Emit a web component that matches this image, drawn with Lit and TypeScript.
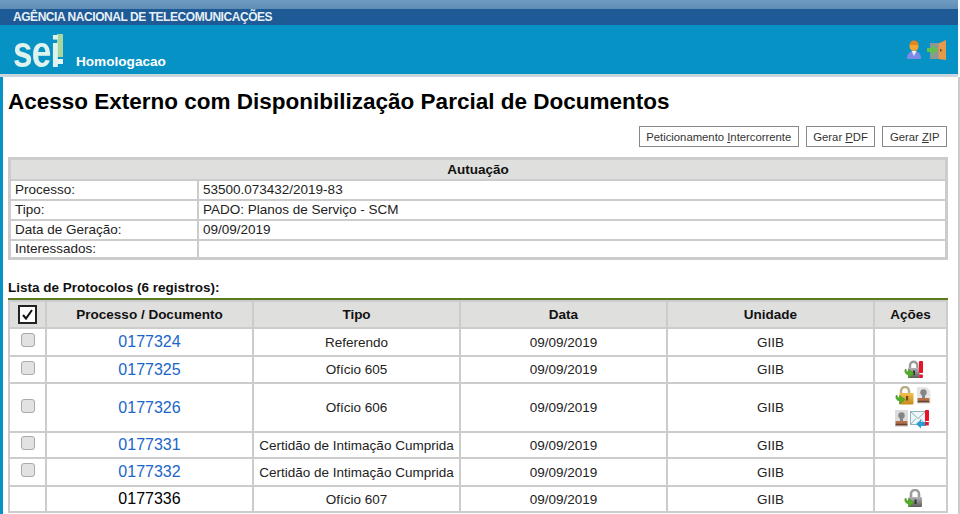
import { LitElement, html, css, svg } from "lit";
import { customElement } from "lit/decorators.js";

const grad = svg`<defs>
  <linearGradient id="g1" x1="0" y1="0" x2="0" y2="1"><stop offset="0" stop-color="#b4b4b4"/><stop offset="1" stop-color="#5f5f5f"/></linearGradient>
  <linearGradient id="g2" x1="0" y1="0" x2="0" y2="1"><stop offset="0" stop-color="#f2c050"/><stop offset="1" stop-color="#c98a1c"/></linearGradient>
</defs>`;
const arrow = svg`<path d="M1 9.5c-.6 3 .8 5 3.6 5.4V18l5.4-4.4L4.6 9.5v2.6C3 12 2 11 2.2 9.5z" fill="#54b028" stroke="#3f8f1c" stroke-width=".6"/>`;
const lockRed = svg`<svg class="ico" viewBox="0 0 20 20">${grad}
  <path d="M6 9V5.5a3.7 3.7 0 0 1 7.4 0V9" fill="none" stroke="#9c9c9c" stroke-width="2.4"/>
  <rect x="4" y="8" width="11.5" height="10" rx="1" fill="url(#g1)"/><rect x="9" y="10.5" width="2" height="4.5" fill="#333"/>
  ${arrow}<rect x="15" y="1" width="4" height="12" rx=".8" fill="#ec1028"/><rect x="15.2" y="14.5" width="3.6" height="3.5" fill="#ec1028"/></svg>`;
const lockGrey = svg`<svg class="ico" viewBox="0 0 20 20">${grad}
  <path d="M7 9V5a4 4 0 0 1 8 0V9" fill="none" stroke="#9c9c9c" stroke-width="2.6"/>
  <rect x="4.5" y="8" width="13.5" height="10" rx="1" fill="url(#g1)"/><rect x="10.5" y="10.5" width="2" height="4.5" fill="#333"/>${arrow}</svg>`;
const lockGold = svg`<svg class="ico" viewBox="0 0 20 20">${grad}
  <path d="M6 8V5a4 4 0 0 1 8 0v3" fill="none" stroke="#b7ab88" stroke-width="2.4"/>
  <rect x="4.5" y="7" width="14" height="11.5" rx="1" fill="url(#g2)"/><rect x="11" y="10" width="2.2" height="4.5" fill="#6a4a10"/>${arrow}</svg>`;
const stampBody = svg`<circle cx="7.5" cy="6.5" r="3.2" fill="#858585"/><rect x="6" y="8" width="3" height="5" fill="#858585"/><rect x="1.5" y="12" width="12" height="2.8" rx="1" fill="#b86f48"/><rect x="1.5" y="14.6" width="12" height="2" rx=".6" fill="#6f4029"/>`;
const stampPaper = svg`<svg class="ico15" viewBox="0 0 15 20"><path d="M1 1h9.5L14.5 5v13H1z" fill="#e6e6e6"/>${stampBody}</svg>`;
const stamp = svg`<svg class="ico15" viewBox="0 0 15 20"><rect x="1" y="1" width="13" height="17" fill="#dcdcdc"/>${stampBody}</svg>`;
const mail = svg`<svg class="ico" viewBox="0 0 20 20"><rect x=".5" y="2.5" width="15" height="13" fill="#eef6f8" stroke="#8db2be"/><path d="M.5 2.5l7.5 7 7.5-7M.5 15.5l5.5-6M15.5 15.5l-5.5-6" fill="none" stroke="#8db2be"/><path d="M6 15l5-4.5v2.5h5v4h-5v2.5z" fill="#2b9fd4"/><rect x="15" y="1" width="4" height="11" rx=".8" fill="#ec1028"/><rect x="15.2" y="13" width="3.6" height="3.4" fill="#ec1028"/></svg>`;

type Row = { id: string; tipo: string; link: boolean; h: number; icons: unknown };
const rows: Row[] = [
  { id: "0177324", tipo: "Referendo", link: true, h: 26, icons: "" },
  { id: "0177325", tipo: "Ofício 605", link: true, h: 25, icons: lockRed },
  { id: "0177326", tipo: "Ofício 606", link: true, h: 47, icons: html`<div class="icons">${lockGold}${stampPaper}</div><div class="icons low">${stamp}${mail}</div>` },
  { id: "0177331", tipo: "Certidão de Intimação Cumprida", link: true, h: 24, icons: "" },
  { id: "0177332", tipo: "Certidão de Intimação Cumprida", link: true, h: 26, icons: "" },
  { id: "0177336", tipo: "Ofício 607", link: false, h: 24, icons: lockGrey },
];

@customElement("app-root")
export class AppRoot extends LitElement {
  static styles = css`
    :host { display: block; height: 514px; overflow: hidden; background: #fff; font-family: "Liberation Sans", Arial, sans-serif; color: #111; }
    .head { margin-right: 2px; }
    .band1 { height: 9px; background: linear-gradient(#6f9cc2, #5d8cb6); }
    .band2 { height: 16px; background: #1d5a96; color: #e8f0f6; font-size: 12px; font-weight: bold; line-height: 16px; padding-left: 13px; letter-spacing: -.45px; }
    .band3 { height: 49px; background: #0792c5; display: flex; align-items: flex-start; padding: 0 11px 0 13px; color: #fff; border-bottom: 3px solid #c9d6dc; }
    .logo { width: 50px; display: flex; height: 40px; margin-top: 9px; }
    .sei { display: block; width: 44px; flex: none; font-size: 44px; font-weight: bold; line-height: 36px; color: #dff3ee; transform: scaleX(.8); transform-origin: left top; white-space: nowrap; letter-spacing: -1px; }
    .bang { display: flex; flex-direction: column; gap: 2px; width: 6px; flex: none; }
    .bang i { display: block; height: 23px; background: #a9d69f; }
    .bang b { display: block; height: 5px; background: #e8f6f2; }
    .sub { font-size: 13.6px; font-weight: bold; margin: 29px 0 0 13px; }
    .top-icons { margin-left: auto; display: flex; gap: 3px; margin-top: 15px; }
    .top-icons svg { width: 20px; height: 20px; display: block; filter: blur(.3px); }
    main { border-left: 3px solid #0792c5; border-right: 2px solid #ccc; padding: 0 10px 0 5px; height: 437px; box-sizing: border-box; }
    h1 { margin: 0; padding-top: 11px; font-size: 22.5px; line-height: 27px; font-weight: bold; color: #000; }
    .btns { display: flex; justify-content: flex-end; gap: 7px; margin: 11px 1px 10px 0; }
    button { height: 21px; padding: 0 6.5px; background: #fff; border: 1px solid #888; font: 11.3px "Liberation Sans", Arial, sans-serif; color: #333; }
    table { width: 940px; table-layout: fixed; border-collapse: separate; border-spacing: 2px; background: #ccc; font-size: 13.5px; }
    td, th { background: #fff; padding: 0; }
    .aut { border: 1px solid #ccc; }
    .aut th { background: #dfdfdd; height: 19px; font-size: 13.5px; }
    .aut td { height: 18px; padding-left: 4px; color: #222; line-height: 16px; }
    .aut tr:last-child td { height: 16px; }
    h2 { font-size: 13.5px; font-weight: bold; margin: 20px 0 3px; line-height: 15px; color: #111; }
    .list-wrap { border-top: 2px solid #5b7a1e; }
    .list th { background: #dfdfdd; font-size: 13.5px; height: 25px; }
    .list td { text-align: center; color: #222; }
    .cb { display: block; width: 12px; height: 12px; margin: -4px auto 0; background: #e2e2e2; border: 1px solid #aaa; border-radius: 3px; }
    .all { display: block; width: 15px; height: 15px; margin: auto; border: 2px solid #222; background: #fff; }
    .all svg { display: block; width: 15px; height: 15px; }
    .pid { font-size: 16px; color: #1a66c9; }
    .pid.plain { color: #000; }
    .ico { width: 20px; height: 20px; display: block; filter: blur(.3px); }
    .ico15 { width: 15px; height: 20px; display: block; filter: blur(.3px); }
    .act > .ico { margin: 0 0 0 29px; }
    .icons { display: flex; padding-left: 20px; gap: 1px; }
    .icons.low { padding-left: 19px; margin-top: 3px; }
  `;

  render() {
    return html`
      <div class="head">
        <div class="band1"></div>
        <div class="band2">AGÊNCIA NACIONAL DE TELECOMUNICAÇÕES</div>
        <div class="band3">
          <div class="logo"><span class="sei">sei</span><span class="bang"><i></i><b></b></span></div>
          <div class="sub">Homologacao</div>
          <div class="top-icons">
            <svg viewBox="0 0 20 20"><path d="M3 19c-.5-5 3-8 7-8s7.500 3 7 8z" fill="#7d8ae6"/><path d="M7.500 11h5l-2.500 5z" fill="#e8f0ff"/><circle cx="10" cy="6.500" r="4.500" fill="#f2a534"/><path d="M5.500 5a4.500 4.500 0 0 1 9 0z" fill="#e0881e"/></svg>
            <svg viewBox="0 0 20 20"><rect x="3" y="3" width="10" height="16" fill="#8b9896"/><path d="M11.500 3.500L19 0v20l-7.500-1z" fill="#e39a4c"/><rect x="13" y="9" width="1.500" height="2.500" fill="#7a4a10"/><path d="M0 8h5V5l6 5-6 5v-3H0z" fill="#62c04c"/></svg>
          </div>
        </div>
      </div>
      <main>
        <h1>Acesso Externo com Disponibilização Parcial de Documentos</h1>
        <div class="btns">
          <button>Peticionamento <u>I</u>ntercorrente</button>
          <button>Gerar <u>P</u>DF</button>
          <button>Gerar <u>Z</u>IP</button>
        </div>
        <table class="aut">
          <colgroup><col style="width:186px" /><col /></colgroup>
          <tr><th colspan="2">Autuação</th></tr>
          <tr><td>Processo:</td><td>53500.073432/2019-83</td></tr>
          <tr><td>Tipo:</td><td>PADO: Planos de Serviço - SCM</td></tr>
          <tr><td>Data de Geração:</td><td>09/09/2019</td></tr>
          <tr><td>Interessados:</td><td></td></tr>
        </table>
        <h2>Lista de Protocolos (6 registros):</h2>
        <div class="list-wrap">
          <table class="list">
            <colgroup>
              <col style="width:35px" /><col style="width:205px" /><col style="width:205px" />
              <col style="width:205px" /><col style="width:205px" /><col />
            </colgroup>
            <tr>
              <th><span class="all"><svg viewBox="0 0 15 15"><path d="M3 8l3 3.500L12 3" fill="none" stroke="#111" stroke-width="2"/></svg></span></th>
              <th>Processo / Documento</th><th>Tipo</th><th>Data</th><th>Unidade</th><th>Ações</th>
            </tr>
            ${rows.map(
              (r) => html`<tr style="height:${r.h}px">
                <td>${r.link ? html`<span class="cb"></span>` : ""}</td>
                <td><span class="pid ${r.link ? "" : "plain"}">${r.id}</span></td>
                <td>${r.tipo}</td>
                <td>09/09/2019</td>
                <td>GIIB</td>
                <td class="act">${r.icons}</td>
              </tr>`
            )}
          </table>
        </div>
      </main>
    `;
  }
}
